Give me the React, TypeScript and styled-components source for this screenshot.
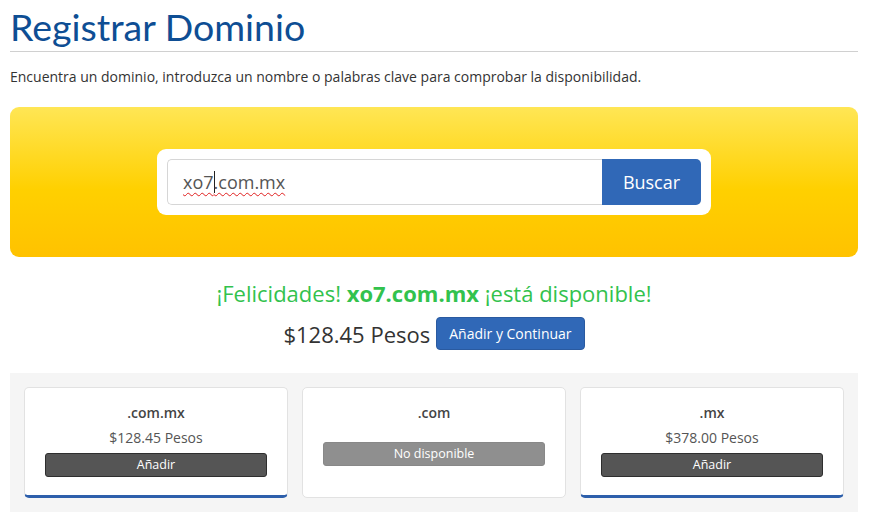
import React from "react";
import styled, { createGlobalStyle } from "styled-components";

const Global = createGlobalStyle`
  html, body { margin: 0; padding: 0; background: #fff; }
  body { font-family: "Open Sans", "Liberation Sans", sans-serif; color: #333; }
  * { box-sizing: border-box; }
`;

const Page = styled.div`
  padding: 0 12px 0 10px;
`;

const Title = styled.h1`
  margin: 0;
  padding-top: 4px;
  font-family: "Lato", "Open Sans", sans-serif;
  font-weight: 400;
  font-size: 37.5px;
  line-height: 45px;
  color: #0e4e94;
  padding-bottom: 2px;
  border-bottom: 1px solid #d0d0d0;
`;

const Intro = styled.p`
  margin: 15px 0 0;
  font-size: 14px;
  line-height: 20px;
  color: #333;
`;

const SearchHero = styled.div`
  margin-top: 20px;
  height: 150px;
  border-radius: 9px;
  background: linear-gradient(to bottom, #ffe655 0%, #ffd000 55%, #ffc200 100%);
  display: flex;
  align-items: center;
  justify-content: center;
`;

const SearchBox = styled.div`
  width: 554px;
  background: #fff;
  border-radius: 9px;
  padding: 10px;
  display: flex;
`;

const Field = styled.div`
  flex: 1;
  height: 46px;
  border: 1px solid #d6d6d6;
  border-right: none;
  border-radius: 5px 0 0 5px;
  display: flex;
  align-items: center;
  padding-left: 15px;
  font-size: 18px;
  color: #555;
`;

const Misspelled = styled.span`
  text-decoration: underline wavy #e02020;
  text-decoration-thickness: 1px;
  text-underline-offset: 3px;
`;

const Caret = styled.span`
  display: inline-block;
  width: 1px;
  height: 22px;
  background: #222;
  vertical-align: middle;
  margin: 0 -1px 0 0;
`;

const SearchButton = styled.button`
  width: 99px;
  height: 46px;
  border: none;
  border-radius: 0 5px 5px 0;
  background: #3068b7;
  color: #fff;
  font-family: inherit;
  font-size: 18px;
`;

const Result = styled.div`
  text-align: center;
  margin-top: 20px;
`;

const Headline = styled.p`
  margin: 0;
  font-size: 22px;
  line-height: 32px;
  color: #32c24d;
  strong { font-weight: 700; }
`;

const PriceRow = styled.div`
  margin-top: 8px;
  display: flex;
  justify-content: center;
  align-items: center;
  gap: 6px;
`;

const BigPrice = styled.span`
  font-size: 22px;
  color: #333;
`;

const PrimaryButton = styled.button`
  height: 33px;
  padding: 0 12px;
  border: 1px solid #2a5aa0;
  border-radius: 4px;
  background: #3068b7;
  color: #fff;
  font-family: inherit;
  font-size: 14px;
`;

const Suggestions = styled.div`
  margin-top: 23px;
  background: #f5f5f5;
  padding: 14px 14px 14px;
  display: grid;
  grid-template-columns: repeat(3, 1fr);
  gap: 14px;
`;

const Card = styled.div<{ $available: boolean }>`
  height: 111px;
  background: #fff;
  border: 1px solid #e2e2e2;
  border-radius: 5px;
  ${(p) => (p.$available ? "border-bottom: 3px solid #2d5fab;" : "")}
  padding: 14px 20px 0;
  text-align: center;
`;

const Tld = styled.div`
  font-size: 14px;
  line-height: 22px;
  font-weight: 600;
  color: #444;
`;

const CardPrice = styled.div`
  margin-top: 3px;
  font-size: 14px;
  line-height: 22px;
  color: #555;
`;

const CardButton = styled.button<{ $disabled?: boolean }>`
  display: block;
  width: 100%;
  height: 24px;
  margin-top: ${(p) => (p.$disabled ? "18px" : "4px")};
  border-radius: 3px;
  border: 1px solid ${(p) => (p.$disabled ? "#888" : "#2e2e2e")};
  background: ${(p) => (p.$disabled ? "#8f8f8f" : "#555")};
  color: #fff;
  font-family: inherit;
  font-size: 12.5px;
  line-height: 20px;
  padding: 0;
`;

const items = [
  { tld: ".com.mx", price: "$128.45 Pesos", available: true },
  { tld: ".com", price: null, available: false },
  { tld: ".mx", price: "$378.00 Pesos", available: true },
];

export default function App() {
  return (
    <Page>
      <Global />
      <Title>Registrar Dominio</Title>
      <Intro>
        Encuentra un dominio, introduzca un nombre o palabras clave para comprobar la disponibilidad.
      </Intro>
      <SearchHero>
        <SearchBox>
          <Field>
            <Misspelled>xo7</Misspelled>
            <Caret />
            <Misspelled>.com.mx</Misspelled>
          </Field>
          <SearchButton>Buscar</SearchButton>
        </SearchBox>
      </SearchHero>
      <Result>
        <Headline>
          ¡Felicidades! <strong>xo7.com.mx</strong> ¡está disponible!
        </Headline>
        <PriceRow>
          <BigPrice>$128.45 Pesos</BigPrice>
          <PrimaryButton>Añadir y Continuar</PrimaryButton>
        </PriceRow>
      </Result>
      <Suggestions>
        {items.map((it) => (
          <Card key={it.tld} $available={it.available}>
            <Tld>{it.tld}</Tld>
            {it.price && <CardPrice>{it.price}</CardPrice>}
            {it.available ? (
              <CardButton>Añadir</CardButton>
            ) : (
              <CardButton $disabled>No disponible</CardButton>
            )}
          </Card>
        ))}
      </Suggestions>
    </Page>
  );
}
